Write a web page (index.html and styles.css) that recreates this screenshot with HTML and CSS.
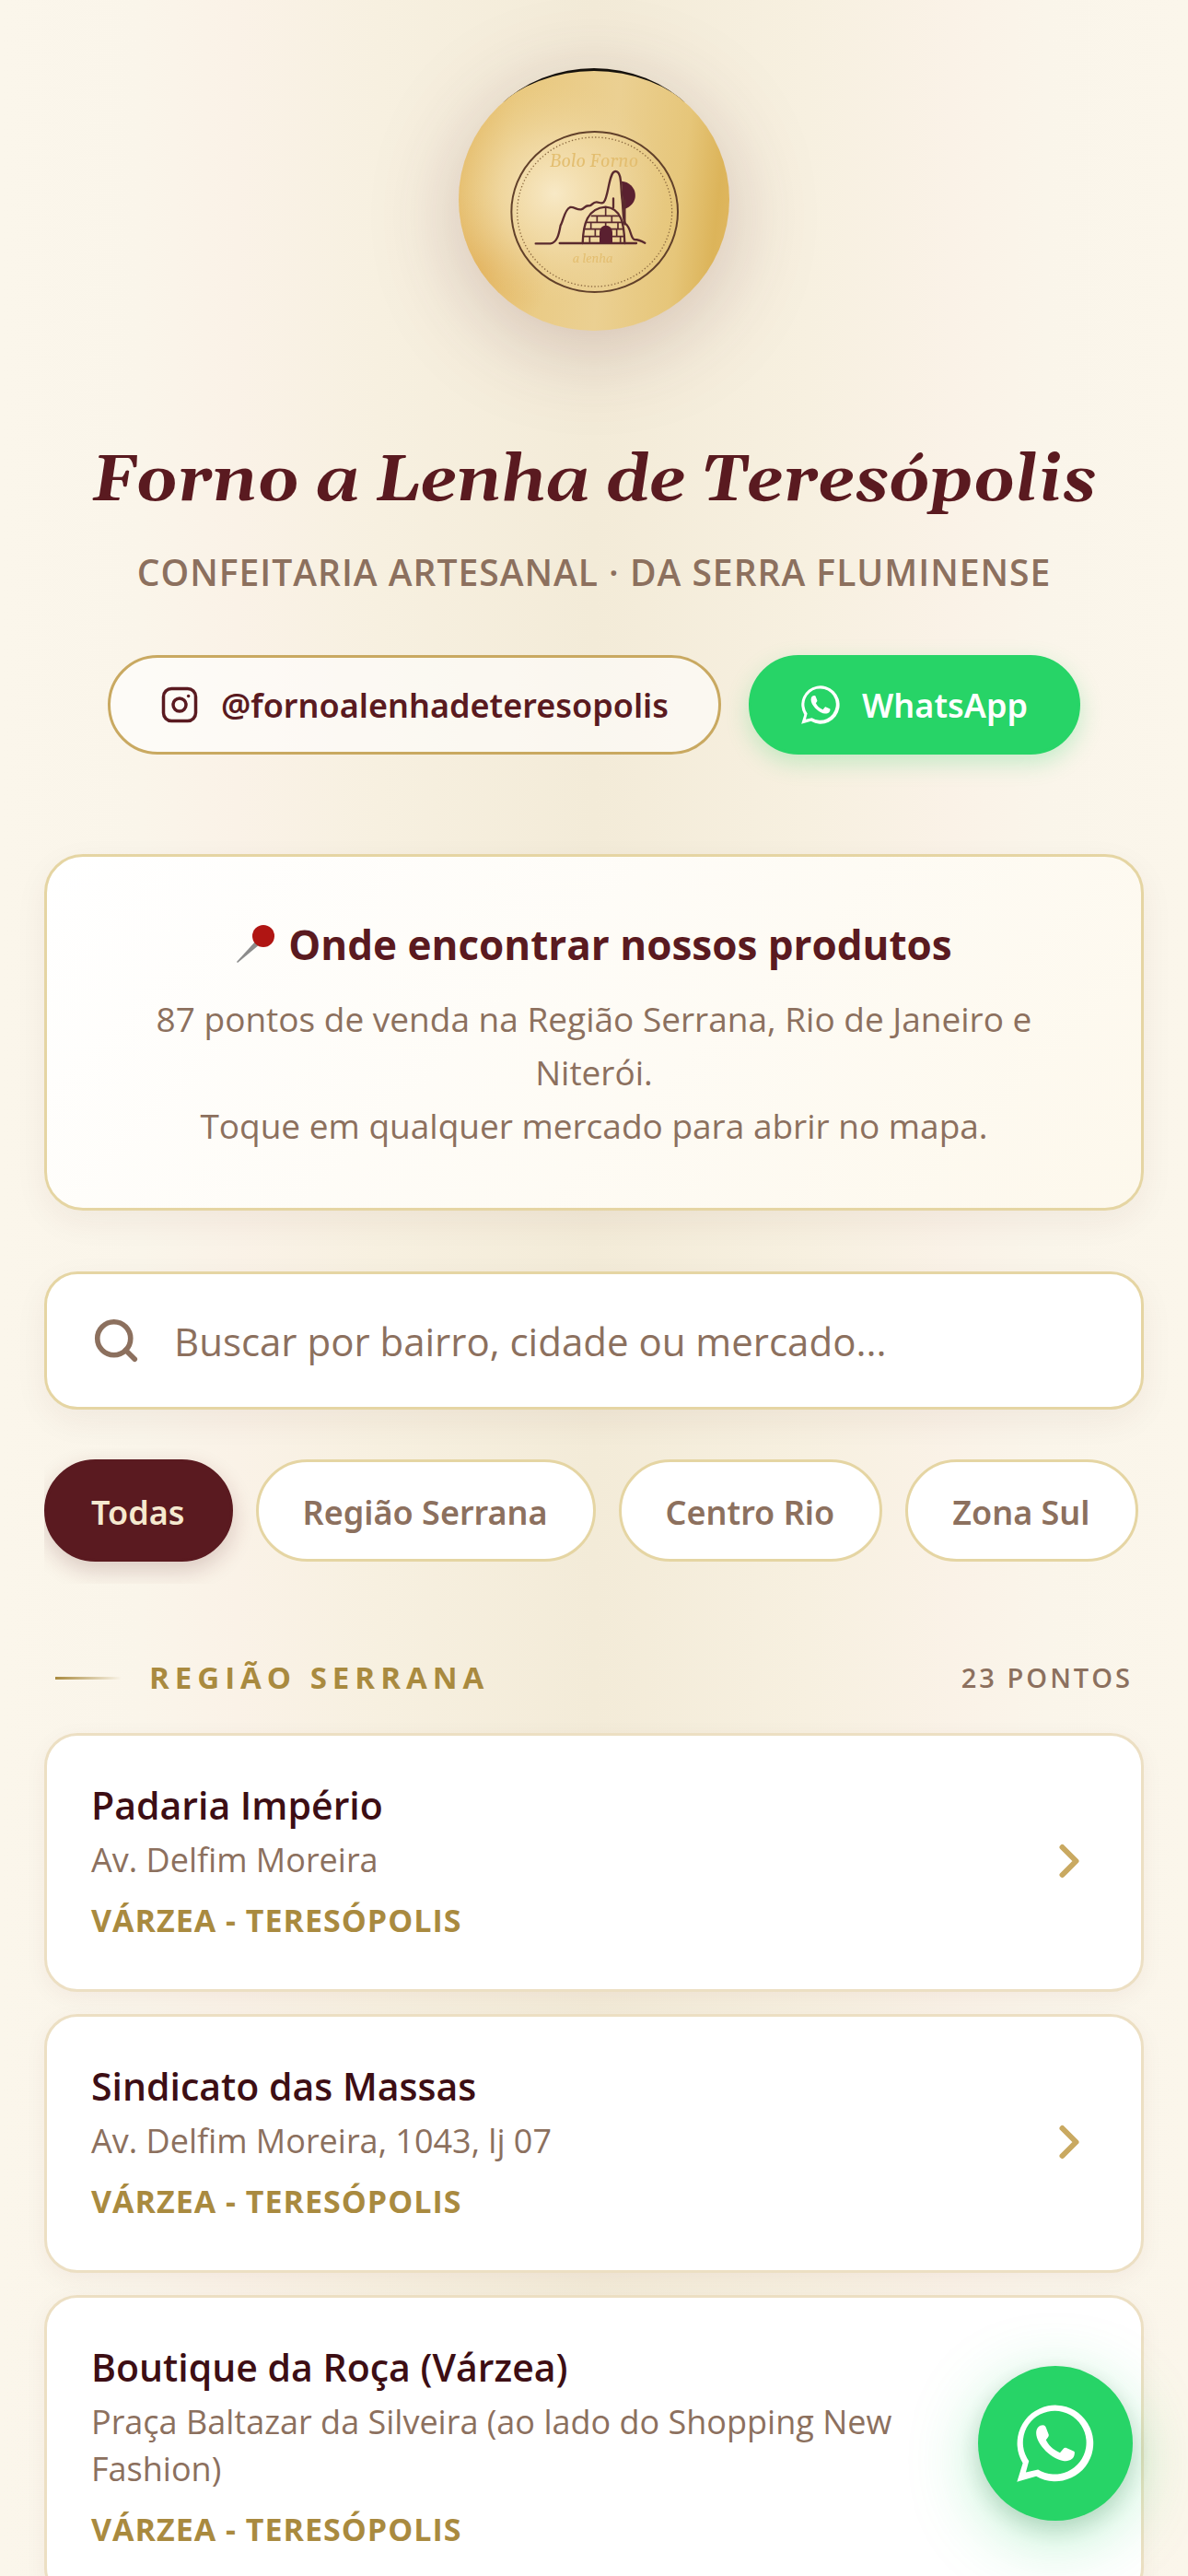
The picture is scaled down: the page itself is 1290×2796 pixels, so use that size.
FILE: index.html
```html
<!DOCTYPE html>
<html lang="pt-BR">
<head>
<meta charset="utf-8">
<meta name="viewport" content="width=device-width, initial-scale=1">
<title>Forno a Lenha de Teresópolis</title>
<link rel="stylesheet" href="styles.css">
</head>
<body>
<svg class="defs" aria-hidden="true">
  <symbol id="whatsapp" viewBox="42 44 254 254">
    <path fill="currentColor" fill-rule="evenodd" d="M43 297L62 236A125 125 0 1 1 106 279ZM72 266L112 257A104 104 0 1 0 82 229Z"/>
    <path fill="currentColor" d="M106 138C106 120 116 111 128 111C134 111 136 114 138 119L147 142C148 147 146 149 138 160C146 177 160 192 184 202L197 187C199 185 202 185 205 186L229 197C233 199 233 202 231 210C228 224 212 229 198 229C160 227 106 175 106 138Z"/>
  </symbol>
  <symbol id="chevron" viewBox="0 0 24 24">
    <path fill="none" stroke="currentColor" stroke-width="2.4" stroke-linecap="round" stroke-linejoin="round" d="M9 6l6 6-6 6"/>
  </symbol>
</svg>

<main class="page">
  <header class="hero">
    <svg class="logo" viewBox="-123 -168 882 855" role="img" aria-label="Bolo Forno a lenha">
      <defs>
        <clipPath id="disc"><ellipse cx="318" cy="259.500" rx="441" ry="427.500"/></clipPath>
        <linearGradient id="gold" x1="0" y1="0.400" x2="1" y2="0.500">
          <stop offset="0" stop-color="#e4b965"/><stop offset=".2" stop-color="#e9c87e"/>
          <stop offset=".55" stop-color="#ebd092"/><stop offset=".8" stop-color="#e6c67a"/>
          <stop offset=".93" stop-color="#dcb45a"/><stop offset="1" stop-color="#e0b760"/>
        </linearGradient>
        <radialGradient id="glow" cx="190" cy="240" r="360" gradientUnits="userSpaceOnUse">
          <stop offset="0" stop-color="#f8e9c6"/><stop offset=".5" stop-color="#f2dcaa" stop-opacity=".7"/>
          <stop offset="1" stop-color="#ecd295" stop-opacity="0"/>
        </radialGradient>
        <radialGradient id="shade" cx="-60" cy="480" r="240" gradientUnits="userSpaceOnUse">
          <stop offset="0" stop-color="#e2b15c" stop-opacity=".8"/><stop offset="1" stop-color="#e2b15c" stop-opacity="0"/>
        </radialGradient>
      </defs>
      <g clip-path="url(#disc)">
        <rect x="-123" y="-168" width="882" height="110" fill="#15110c"/>
        <ellipse cx="318" cy="275" rx="470" ry="434" fill="url(#gold)"/>
        <ellipse cx="318" cy="275" rx="470" ry="434" fill="url(#shade)"/>
        <ellipse cx="318" cy="275" rx="470" ry="434" fill="url(#glow)"/>
      </g>
      <ellipse cx="320" cy="300" rx="271" ry="261" fill="none" stroke="#61402a" stroke-width="6"/>
      <ellipse cx="320" cy="300" rx="252" ry="243" fill="none" stroke="#8c6a40" stroke-width="4" stroke-dasharray="4 7"/>
      <text class="logo-name" x="318" y="152" text-anchor="middle">Bolo Forno</text>
      <text class="logo-sub" x="314" y="464" text-anchor="middle">a lenha</text>
      <path d="M408 200A48 46 0 0 1 414 291Z" fill="#5a2030"/>
      <g fill="none" stroke="#5a2a2e" stroke-width="7" stroke-linecap="round" stroke-linejoin="round">
        <path d="M128 403H176C198 400 204 372 209 344C218 330 222 292 240 285C252 282 262 294 276 292C288 290 288 278 302 280C312 281 312 268 326 268C336 268 342 276 350 268C366 250 366 168 388 168C410 168 404 220 410 262C414 300 412 330 420 338C440 352 436 388 450 390C464 390 472 394 484 401"/>
        <path d="M206 402H456"/>
        <path d="M281 402C283 340 296 288 356 284C408 288 416 340 418 402"/>
        <path d="M381 256V286M418 262V340"/>
      </g>
      <g fill="none" stroke="#5a2a2e" stroke-width="5">
        <path d="M308 313H402M292 334H414M286 356H416M284 380H418"/>
        <path d="M356 284V313M328 313V334M376 313V334M308 334V356M356 334V356M396 334V356M322 356V380M392 356V380M304 380V402M404 380V402"/>
      </g>
      <path d="M336 402V368C336 352 346 344 356 344C368 344 378 352 378 368V402Z" fill="#5a2030"/>
    </svg>
    <h1 class="title">Forno a Lenha de Teresópolis</h1>
    <p class="tagline">Confeitaria Artesanal · da Serra Fluminense</p>
    <nav class="links">
      <a class="pill pill-instagram" href="#instagram">
        <svg class="pill-icon" viewBox="0 0 24 24" fill="none" stroke="currentColor" stroke-width="2" aria-hidden="true">
          <rect x="2" y="2" width="20" height="20" rx="5"/><circle cx="12" cy="12" r="4"/>
          <circle cx="17.500" cy="6.500" r="1" fill="currentColor" stroke="none"/>
        </svg>
        <span class="pill-label">@fornoalenhadeteresopolis</span>
      </a>
      <a class="pill pill-whatsapp" href="#whatsapp-chat">
        <svg class="pill-icon" aria-hidden="true"><use href="#whatsapp"/></svg>
        <span class="pill-label">WhatsApp</span>
      </a>
    </nav>
  </header>

  <section class="info">
    <h2 class="info-title">
      <svg class="pin" viewBox="0 0 42 42" aria-hidden="true">
        <path d="M22 17L26 21L2 41L1 40Z" fill="#8c8c8c"/><circle cx="30" cy="12" r="12" fill="#b01513"/>
      </svg>
      Onde encontrar nossos produtos
    </h2>
    <p class="info-text">87 pontos de venda na Região Serrana, Rio de Janeiro e Niterói.<br>Toque em qualquer mercado para abrir no mapa.</p>
  </section>

  <label class="search">
    <svg class="search-icon" viewBox="0 0 24 24" fill="none" stroke="currentColor" stroke-width="2.500" stroke-linecap="round" aria-hidden="true">
      <circle cx="11" cy="11" r="8"/><path d="M21 21l-4.350-4.350"/>
    </svg>
    <input class="search-input" type="search" placeholder="Buscar por bairro, cidade ou mercado..." aria-label="Buscar por bairro, cidade ou mercado">
  </label>

  <div class="chips">
    <button class="chip chip-active" type="button">Todas</button>
    <button class="chip" type="button">Região Serrana</button>
    <button class="chip" type="button">Centro Rio</button>
    <button class="chip" type="button">Zona Sul</button>
  </div>

  <section class="region">
    <div class="region-head">
      <h2 class="region-name">Região Serrana</h2>
      <span class="region-count">23 pontos</span>
    </div>
    <div class="stores">
      <a class="store" href="#padaria-imperio">
        <span class="store-body">
          <span class="store-name">Padaria Império</span>
          <span class="store-address">Av. Delfim Moreira</span>
          <span class="store-area">Várzea - Teresópolis</span>
        </span>
        <svg class="store-arrow" aria-hidden="true"><use href="#chevron"/></svg>
      </a>
      <a class="store" href="#sindicato-das-massas">
        <span class="store-body">
          <span class="store-name">Sindicato das Massas</span>
          <span class="store-address">Av. Delfim Moreira, 1043, lj 07</span>
          <span class="store-area">Várzea - Teresópolis</span>
        </span>
        <svg class="store-arrow" aria-hidden="true"><use href="#chevron"/></svg>
      </a>
      <a class="store" href="#boutique-da-roca">
        <span class="store-body">
          <span class="store-name">Boutique da Roça (Várzea)</span>
          <span class="store-address">Praça Baltazar da Silveira (ao lado do Shopping New Fashion)</span>
          <span class="store-area">Várzea - Teresópolis</span>
        </span>
        <svg class="store-arrow" aria-hidden="true"><use href="#chevron"/></svg>
      </a>
    </div>
  </section>
</main>

<a class="fab" href="#whatsapp-chat" aria-label="WhatsApp">
  <svg class="fab-icon" aria-hidden="true"><use href="#whatsapp"/></svg>
</a>
</body>
</html>
```
FILE: styles.css
```css
:root {
  --wine: #5a1a20;
  --wine-dark: #3d0e14;
  --brown: #8c705e;
  --gold: #c9a961;
  --gold-dark: #a98a3f;
  --gold-light: #e5d5a3;
  --green: #27d467;
}

* { box-sizing: border-box; }

body {
  margin: 0;
  font-family: "Open Sans", "Noto Sans", sans-serif;
  color: var(--wine-dark);
  background: linear-gradient(90deg, #fbf6eb 0%, #faf5ea 12%, #faf2e7 20%, #f7f0e0 32%, #f3ebd8 50%, #f7f0e0 68%, #faf2e7 80%, #faf5ea 88%, #fbf6eb 100%);
}

h1, h2, p { margin: 0; }
a { color: inherit; text-decoration: none; }

.defs { position: absolute; width: 0; height: 0; }

.page { padding: 74px 48px 120px; }

/* Header */
.hero {
  display: flex;
  flex-direction: column;
  align-items: center;
  text-align: center;
}

.logo {
  width: 294px;
  height: 285px;
  overflow: visible;
  filter: drop-shadow(0 18px 48px rgba(90, 26, 32, 0.22));
}

.logo-name, .logo-sub {
  font-family: Gelasio, "Liberation Serif", serif;
  font-style: italic;
  fill: #e3be70;
}
.logo-name { font-size: 58px; }
.logo-sub { font-size: 40px; }

.title {
  margin-top: 118px;
  font-family: Gelasio, "Liberation Serif", serif;
  font-size: 71px;
  font-style: italic;
  font-weight: 700;
  line-height: 90px;
  color: var(--wine);
}

.tagline {
  margin-top: 27px;
  font-size: 39px;
  font-weight: 600;
  line-height: 54px;
  letter-spacing: 1px;
  text-transform: uppercase;
  color: var(--brown);
}

.links {
  display: flex;
  flex-wrap: wrap;
  justify-content: center;
  gap: 30px;
  margin-top: 63px;
}

.pill {
  display: flex;
  align-items: center;
  gap: 24px;
  padding: 24px 54px;
  border: 3px solid transparent;
  border-radius: 54px;
  font-family: "Noto Sans", "Open Sans", sans-serif;
  font-size: 36px;
  font-weight: 600;
  line-height: 54px;
}
.pill-instagram {
  border-color: var(--gold);
  background: rgba(255, 255, 255, 0.6);
  color: var(--wine);
}
.pill-whatsapp {
  border-color: var(--green);
  background: var(--green);
  color: #fff;
  box-shadow: 0 9px 24px rgba(39, 212, 103, 0.25);
}
.pill-icon { width: 42px; height: 42px; }
.pill-label { padding-top: 2px; line-height: 52px; }

/* Info card */
.info {
  margin-top: 108px;
  padding: 62px 72px 60px;
  border: 3px solid var(--gold-light);
  border-radius: 42px;
  background: linear-gradient(135deg, #fff 0%, #fdf8ec 100%);
  box-shadow: 0 12px 36px rgba(90, 26, 32, 0.06);
  text-align: center;
}
.info-title {
  display: flex;
  align-items: center;
  justify-content: center;
  gap: 15px;
  font-size: 44px;
  font-weight: 700;
  line-height: 66px;
  color: var(--wine);
}
.pin { width: 42px; height: 42px; }
.info-text {
  margin-top: 19px;
  font-size: 37px;
  line-height: 58px;
  color: var(--brown);
}

/* Search */
.search {
  display: flex;
  align-items: center;
  gap: 36px;
  margin-top: 66px;
  padding: 42px 48px;
  border: 3px solid var(--gold-light);
  border-radius: 36px;
  background: #fff;
  box-shadow: 0 12px 36px rgba(90, 26, 32, 0.06);
  color: var(--brown);
}
.search-icon { flex: none; width: 54px; height: 54px; }
.search-input {
  flex: 1;
  min-width: 0;
  height: 60px;
  padding: 0;
  border: 0;
  outline: 0;
  background: none;
  font: inherit;
  font-size: 42px;
  color: var(--wine-dark);
}
.search-input::placeholder { color: var(--brown); opacity: 1; }

/* Filter chips */
.chips {
  display: flex;
  gap: 25px;
  margin-top: 42px;
  padding: 12px 0 24px;
  overflow: hidden;
}
.chip {
  flex: none;
  padding: 28px 49px 23px 48px;
  border: 3px solid var(--gold-light);
  border-radius: 56px;
  background: #fff;
  font-family: "Noto Sans", "Open Sans", sans-serif;
  font-size: 36px;
  font-weight: 600;
  line-height: 54px;
  color: var(--brown);
}
.chip-active {
  border-color: var(--wine);
  background: var(--wine);
  color: #f5e9cf;
  box-shadow: 0 9px 24px rgba(90, 26, 32, 0.2);
}

/* Region list */
.region { margin-top: 72px; }
.region-head {
  display: flex;
  align-items: center;
  gap: 30px;
  padding: 0 12px 30px;
}
.region-head::before {
  content: "";
  width: 72px;
  height: 3px;
  background: linear-gradient(90deg, var(--gold-dark), transparent);
}
.region-name {
  flex: 1;
  font-size: 33px;
  font-weight: 700;
  line-height: 60px;
  letter-spacing: 6px;
  text-transform: uppercase;
  color: var(--gold-dark);
}
.region-count {
  font-size: 29px;
  font-weight: 600;
  line-height: 60px;
  letter-spacing: 3px;
  text-transform: uppercase;
  color: var(--brown);
}
.stores { display: grid; gap: 24px; }
.store {
  display: flex;
  align-items: center;
  gap: 48px;
  padding: 47px 48px 50px;
  border: 3px solid #ecdfc3;
  border-radius: 36px;
  background: #fff;
  box-shadow: 0 6px 24px rgba(90, 26, 32, 0.05);
}
.store-body { display: grid; flex: 1; min-width: 0; }
.store-name {
  font-size: 41px;
  font-weight: 600;
  line-height: 56px;
}
.store-address {
  margin-top: 6px;
  font-size: 36px;
  line-height: 51px;
  color: var(--brown);
}
.store-area {
  margin-top: 15px;
  font-size: 34px;
  font-weight: 700;
  line-height: 50px;
  letter-spacing: 1px;
  text-transform: uppercase;
  color: var(--gold-dark);
}
.store-arrow { flex: none; width: 60px; height: 60px; color: var(--gold); }

/* Floating contact button */
.fab {
  position: fixed;
  right: 60px;
  bottom: 60px;
  display: grid;
  place-items: center;
  width: 168px;
  height: 168px;
  border-radius: 50%;
  background: var(--green);
  color: #fff;
  box-shadow: 0 18px 72px rgba(39, 212, 103, 0.35), 0 9px 24px rgba(0, 0, 0, 0.16);
}
.fab-icon { width: 84px; height: 84px; }
```
